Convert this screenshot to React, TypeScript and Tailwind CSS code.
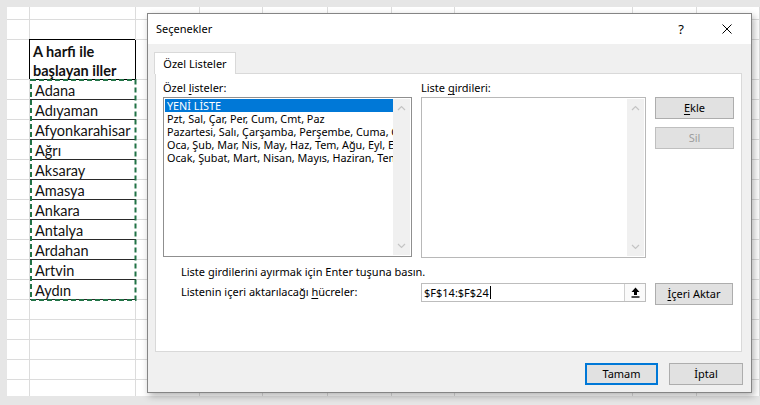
import React from "react";

const colW = [
  "w-[23px]",
  "w-[106px]",
  "w-[64px]",
  "w-[63px]",
  "w-[65px]",
  "w-[64px]",
  "w-[63px]",
  "w-[178px]",
  "w-[64px]",
  "w-[63px]",
];

const provinces = [
  "Adana",
  "Adıyaman",
  "Afyonkarahisar",
  "Ağrı",
  "Aksaray",
  "Amasya",
  "Ankara",
  "Antalya",
  "Ardahan",
  "Artvin",
  "Aydın",
];

type Row = { h: string; kind: "blank" | "header" | "data" | "last"; text?: string };

const rows: Row[] = [
  { h: "h-[13px]", kind: "blank" },
  { h: "h-[20px]", kind: "blank" },
  { h: "h-[40px]", kind: "header" },
  ...provinces.map((p) => ({ h: "h-[20px]", kind: "data" as const, text: p })),
  { h: "h-[20px]", kind: "blank" },
  { h: "h-[20px]", kind: "blank" },
  { h: "h-[20px]", kind: "blank" },
  { h: "h-[20px]", kind: "blank" },
  { h: "h-[16px]", kind: "last" },
];

function Sheet() {
  return (
    <div className="pt-[7px] pl-[7px] font-['Lato',sans-serif] text-[14.5px] text-[#111]">
      <div className="bg-white">
        {rows.map((r, i) => (
          <div key={i} className={`flex ${r.h}`}>
            {colW.map((w, j) => {
              if (j === 1 && r.kind === "header") {
                return (
                  <div
                    key={j}
                    className={`${w} shrink-0 border-r border-b border-black shadow-[-1px_-1px_0_0_#000] pl-[3px] pt-[2px] font-bold leading-[19px] whitespace-nowrap`}
                  >
                    <div>A harfi ile</div>
                    <div>başlayan iller</div>
                  </div>
                );
              }
              if (j === 1 && r.kind === "data") {
                return (
                  <div
                    key={j}
                    className={`${w} shrink-0 border-b border-[#2a2a2a] pl-[5px] pt-[1px] leading-[19px] whitespace-nowrap overflow-hidden`}
                  >
                    {r.text}
                  </div>
                );
              }
              if (r.kind === "last") {
                return <div key={j} className={`${w} shrink-0 border-r border-[#dcdcdc]`} />;
              }
              return <div key={j} className={`${w} shrink-0 border-r border-b border-[#dcdcdc]`} />;
            })}
          </div>
        ))}
      </div>
    </div>
  );
}

function Marquee() {
  return (
    <svg className="absolute left-[30px] top-[79px]" width="107" height="222" viewBox="0 0 107 222">
      <rect
        x="1"
        y="1"
        width="104.5"
        height="220"
        fill="none"
        stroke="#217346"
        strokeWidth="2"
        strokeDasharray="5 3"
      />
    </svg>
  );
}

function ChevronUp() {
  return (
    <svg width="9" height="6" viewBox="0 0 9 6">
      <path d="M1 5 L4.5 1.5 L8 5" fill="none" stroke="#c4c4c4" strokeWidth="1.2" />
    </svg>
  );
}

function ChevronDown() {
  return (
    <svg width="9" height="6" viewBox="0 0 9 6">
      <path d="M1 1 L4.5 4.5 L8 1" fill="none" stroke="#c4c4c4" strokeWidth="1.2" />
    </svg>
  );
}

function Scrollbar() {
  return (
    <div className="w-[17px] shrink-0 my-[1px] mr-[1px] bg-[#f0f0f0] flex flex-col items-center justify-between py-[6px]">
      <ChevronUp />
      <ChevronDown />
    </div>
  );
}

function UploadIcon() {
  return (
    <svg width="9" height="11" viewBox="0 0 9 11">
      <path d="M4.5 0.5 L8.5 5 L6 5 L6 8 L3 8 L3 5 L0.5 5 Z" fill="#000" />
      <rect x="0.5" y="9.3" width="8" height="1.4" fill="#000" />
    </svg>
  );
}

const listItems = [
  "Pzt, Sal, Çar, Per, Cum, Cmt, Paz",
  "Pazartesi, Salı, Çarşamba, Perşembe, Cuma, Cumartesi, Pazar",
  "Oca, Şub, Mar, Nis, May, Haz, Tem, Ağu, Eyl, Eki, Kas, Ara",
  "Ocak, Şubat, Mart, Nisan, Mayıs, Haziran, Temmuz, Ağustos, Eylül, Ekim, Kasım, Aralık",
];

function Dialog() {
  return (
    <div className="absolute left-[147px] top-[13px] w-[605px] h-[380px] border border-[#858585] bg-[#f0f0f0] shadow-[2px_3px_7px_rgba(0,0,0,0.3)] flex flex-col font-['Noto_Sans',sans-serif] text-[11px] text-black">
      {/* Title bar */}
      <div className="h-[30px] shrink-0 bg-white flex items-center pl-[8px] pr-[19px]">
        <span className="leading-[14px]">Seçenekler</span>
        <span className="ml-auto text-[13px] leading-[14px]">?</span>
        <svg className="ml-[38px]" width="10" height="10" viewBox="0 0 10 10">
          <path d="M0.5 0.5 L9.5 9.5 M9.5 0.5 L0.5 9.5" stroke="#000" strokeWidth="1" />
        </svg>
      </div>

      {/* Body */}
      <div className="flex-1 flex flex-col pl-[7px] pr-[9px] pt-[8px]">
        {/* Tab */}
        <div className="relative z-10 w-[82px] h-[22px] -ml-[1px] bg-white border-t border-l border-r border-[#d9d9d9] flex items-center justify-center leading-[14px]">
          Özel Listeler
        </div>
        {/* Panel */}
        <div className="-mt-[1px] h-[279px] bg-white border border-[#d9d9d9] flex flex-col">
          <div className="flex items-start pl-[7px]">
            {/* Left list */}
            <div className="w-[249px] shrink-0 flex flex-col">
              <div className="h-[23px] flex items-end pb-[2px] leading-[14px]">
                <span>
                  Özel <span className="underline underline-offset-2">l</span>isteler:
                </span>
              </div>
              <div className="h-[160px] border border-[#8f8f8f] bg-white flex">
                <div className="flex-1 min-w-0 overflow-hidden pt-[1px] pl-[1px] text-[10.8px]">
                  <div className="h-[13px] bg-[#0078d7] text-white leading-[13px] pl-[2px] whitespace-nowrap">
                    YENİ LİSTE
                  </div>
                  {listItems.map((t) => (
                    <div key={t} className="h-[13px] leading-[13px] pl-[2px] whitespace-nowrap">
                      {t}
                    </div>
                  ))}
                </div>
                <Scrollbar />
              </div>
            </div>

            {/* Right list */}
            <div className="w-[225px] shrink-0 ml-[9px] flex flex-col">
              <div className="h-[23px] flex items-end pb-[2px] leading-[14px]">
                <span>
                  Liste <span className="underline underline-offset-2">g</span>irdileri:
                </span>
              </div>
              <div className="h-[161px] border border-[#b8b8b8] bg-white flex">
                <div className="flex-1" />
                <Scrollbar />
              </div>
            </div>

            {/* Buttons */}
            <div className="w-[79px] shrink-0 ml-[9px] pt-[23px] flex flex-col gap-[8px]">
              <div className="h-[22px] border border-[#adadad] bg-[#e1e1e1] flex items-center justify-center leading-[14px]">
                <span>
                  <span className="underline underline-offset-2">E</span>kle
                </span>
              </div>
              <div className="h-[22px] border border-[#bfbfbf] bg-[#e1e1e1] flex items-center justify-center leading-[14px] text-[#9d9d9d]">
                Sil
              </div>
            </div>
          </div>

          <div className="pl-[25px] mt-[7px] leading-[14px]">
            Liste girdilerini ayırmak için Enter tuşuna basın.
          </div>

          <div className="flex items-start mt-[4px] pl-[7px]">
            <div className="w-[258px] shrink-0 pl-[18px] leading-[18px]">
              Listenin içeri aktarılacağı <span className="underline underline-offset-2">h</span>ücreler:
            </div>
            <div className="w-[225px] h-[19px] shrink-0 border border-[#bdbdbd] bg-white flex">
              <div className="flex-1 flex items-center pl-[2px] leading-[14px]">
                <span>$F$14:$F$24</span>
                <span className="w-[1px] h-[13px] bg-black ml-[1px]" />
              </div>
              <div className="w-[21px] border-l border-[#d0d0d0] bg-[#fafafa] flex items-center justify-center">
                <UploadIcon />
              </div>
            </div>
            <div className="w-[78px] h-[22px] shrink-0 ml-[9px] border border-[#adadad] bg-[#e1e1e1] flex items-center justify-center leading-[14px]">
              <span>
                <span className="underline underline-offset-2">İ</span>çeri Aktar
              </span>
            </div>
          </div>
        </div>

        {/* Bottom buttons */}
        <div className="mt-[11px] flex justify-end gap-[11px] -mr-[1px]">
          <div className="w-[73px] h-[22px] border-2 border-[#0078d7] bg-[#e1e1e1] flex items-center justify-center leading-[14px]">
            Tamam
          </div>
          <div className="w-[74px] h-[22px] border border-[#adadad] bg-[#e1e1e1] flex items-center justify-center leading-[14px]">
            İptal
          </div>
        </div>
      </div>
    </div>
  );
}

export default function App() {
  return (
    <div className="relative w-[760px] h-[405px] overflow-hidden bg-[#e6e6e6]">
      <Sheet />
      <Marquee />
      <Dialog />
    </div>
  );
}
